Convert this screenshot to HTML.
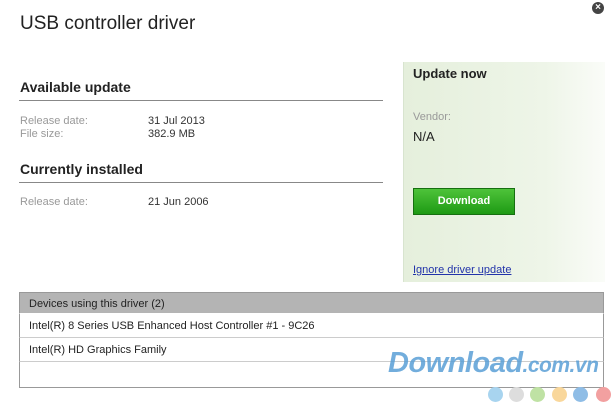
<!DOCTYPE html>
<html><head><style>
body{margin:0;width:611px;height:400px;background:#fff;font-family:"Liberation Sans",sans-serif;position:relative;overflow:hidden}
.a{position:absolute;white-space:nowrap}
.g{color:#999;font-size:11px}
.v{color:#333;font-size:11px}
.h{font-weight:bold;font-size:14px;color:#222}
.line{position:absolute;left:19px;width:364px;height:1px;background:#888}
.row{position:absolute;left:19px;width:585px;font-size:11px;color:#222;border-left:1px solid #999;border-right:1px solid #999;box-sizing:border-box;padding-left:9px}
.d{position:absolute;top:387px;width:15px;height:15px;border-radius:50%}
</style></head><body>
<div class="a" style="left:592px;top:2px;width:12px;height:12px;border-radius:50%;background:#444;color:#fff;font-size:10px;line-height:12px;text-align:center;font-weight:bold">×</div>
<div class="a" style="left:20px;top:13px;font-size:19px;color:#222">USB controller driver</div>
<div class="a h" style="left:20px;top:79px">Available update</div>
<div class="line" style="top:100px"></div>
<div class="a g" style="left:20px;top:115px">Release date:</div>
<div class="a v" style="left:148px;top:115px">31 Jul 2013</div>
<div class="a g" style="left:20px;top:128px">File size:</div>
<div class="a v" style="left:148px;top:128px">382.9 MB</div>
<div class="a h" style="left:20px;top:161px">Currently installed</div>
<div class="line" style="top:182px"></div>
<div class="a g" style="left:20px;top:196px">Release date:</div>
<div class="a v" style="left:148px;top:196px">21 Jun 2006</div>
<div class="a" style="left:403px;top:62px;width:201px;height:220px;background:linear-gradient(90deg,#e5efdc,#eef5e8 70%,#fafcf8);border-left:1px solid #d8e4cf"></div>
<div class="a h" style="left:413px;top:66px;font-size:13px">Update now</div>
<div class="a g" style="left:413px;top:111px">Vendor:</div>
<div class="a" style="left:413px;top:129px;font-size:13px;color:#222">N/A</div>
<div class="a" style="left:413px;top:188px;width:100px;height:25px;background:linear-gradient(#4ec33a,#1e9a14);border:1px solid #166f10;color:#fff;font-weight:bold;font-size:11px;text-align:center;line-height:25px">Download</div>
<div class="a" style="left:413px;top:264px;font-size:11px;color:#2233aa;text-decoration:underline">Ignore driver update</div>
<div class="row" style="top:292px;height:22px;line-height:22px;background:#b4b4b4;border-top:1px solid #999;border-bottom:1px solid #fff">Devices using this driver (2)</div>
<div class="row" style="top:314px;height:24px;line-height:24px;border-bottom:1px solid #ccc">Intel(R) 8 Series USB Enhanced Host Controller #1 - 9C26</div>
<div class="row" style="top:338px;height:24px;line-height:24px;border-bottom:1px solid #ccc">Intel(R) HD Graphics Family</div>
<div class="row" style="top:362px;height:26px;border-bottom:1px solid #999"></div>
<div class="a" style="left:388px;top:347px;font-size:29px;font-weight:bold;font-style:italic;color:#5a9fd6;opacity:.85;letter-spacing:-0.5px">Download<span style="font-size:21px">.com.vn</span></div>
<div class="d" style="left:488px;background:#a8d4ef"></div>
<div class="d" style="left:509px;background:#ddd"></div>
<div class="d" style="left:530px;background:#bfe2a4"></div>
<div class="d" style="left:552px;background:#f9d79b"></div>
<div class="d" style="left:573px;background:#8fbde6"></div>
<div class="d" style="left:596px;background:#f2a0a0"></div>
</body></html>
